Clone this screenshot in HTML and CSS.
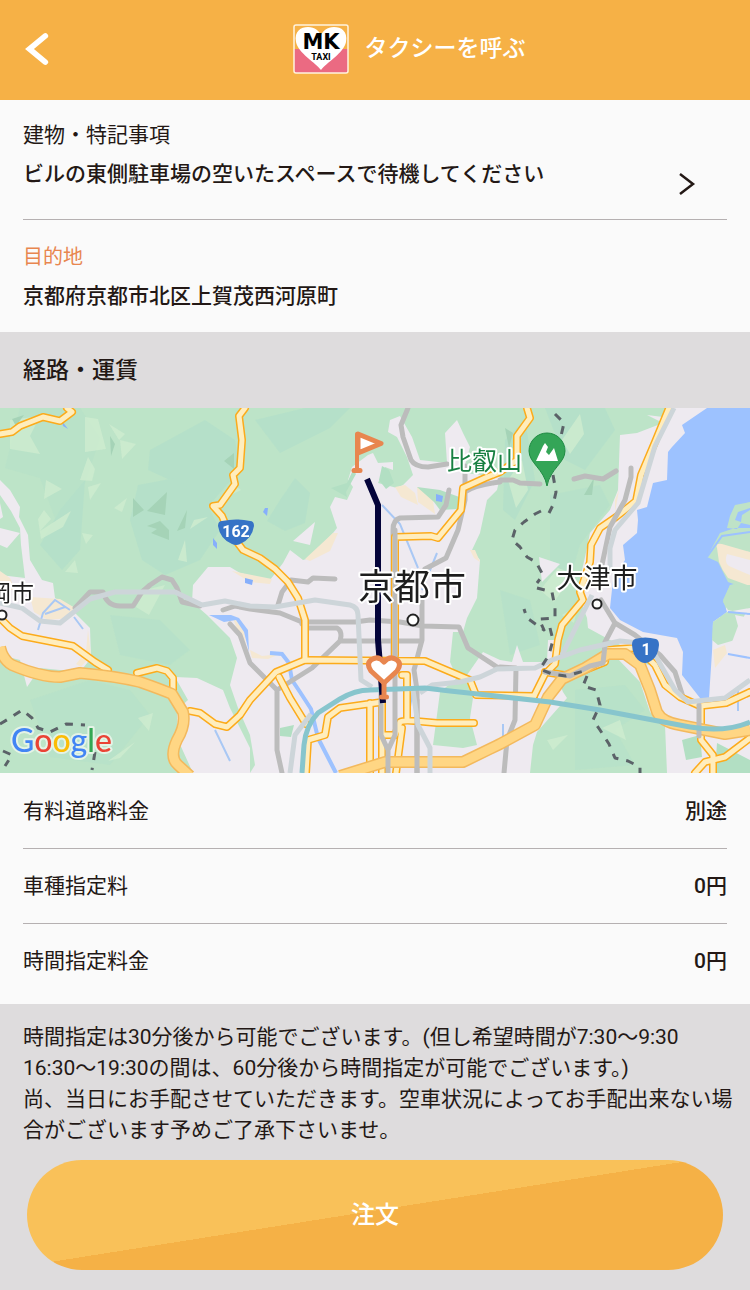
FILE: index.html
```html
<!DOCTYPE html>
<html lang="ja">
<head>
    <meta charset="UTF-8">
    <meta name="viewport" content="width=device-width, initial-scale=1.0">
    <title>タクシーを呼ぶ</title>
    <link rel="stylesheet" href="styles.css">
</head>
<body>
    <!-- Header -->
    <header class="header">
        <button type="button" class="back-button" aria-label="戻る">
            <svg width="30" height="40" viewBox="0 0 30 40"><path d="M25 6 8 20 25 34" fill="none" stroke="#fff" stroke-width="6" stroke-linecap="round" stroke-linejoin="miter"/></svg>
        </button>
        <div class="brand">
            <svg class="logo" width="56" height="50" viewBox="0 0 56 50">
                <rect x="1" y="1" width="54" height="48" rx="2" fill="#f6b146"/>
                <path d="M1 25h54v22a2 2 0 0 1-2 2H3a2 2 0 0 1-2-2z" fill="#eb6a82"/>
                <path d="M28 46C23 39 5 29 3 18C1 7 8 3 15 3C22 3 26 7 28 11C30 7 34 3 41 3C48 3 55 7 53 18C51 29 33 39 28 46z" fill="#fff"/>
                <rect x="1" y="1" width="54" height="48" rx="2" fill="none" stroke="#fff3df" stroke-width="1.500"/>
                <text class="logo-mk" x="28" y="25" text-anchor="middle">MK</text>
                <text class="logo-taxi" x="28" y="36" text-anchor="middle">TAXI</text>
            </svg>
            <h1>タクシーを呼ぶ</h1>
        </div>
    </header>

    <main>
        <!-- Pickup and destination -->
        <section class="places">
            <button type="button" class="place place-link">
                <span class="place-text">
                    <span class="place-label">建物・特記事項</span>
                    <span class="place-value">ビルの東側駐車場の空いたスペースで待機してください</span>
                </span>
                <svg class="chevron" width="18" height="24" viewBox="0 0 18 24"><path d="M2 2l13 10L2 22" fill="none" stroke="#231815" stroke-width="2.500"/></svg>
            </button>
            <div class="place">
                <span class="place-text">
                    <span class="place-label accent">目的地</span>
                    <span class="place-value">京都府京都市北区上賀茂西河原町</span>
                </span>
            </div>
        </section>

        <h2 class="section-title">経路・運賃</h2>

        <!-- Route map -->
        <svg class="map" viewBox="0 408 750 365" role="img" aria-label="経路の地図">
            <defs>
                <g id="roads">
                    <path d="M0 434L12 432 20 426 43 417 60 421 72 412 67 408M245 408L239 416 242 440 240 468 233 475 235 484 220 505 213 506 222 516 228 530 243 550 260 558 275 569 288 582 298 598 305 620V660"/>
                    <path d="M527 408L530 418 517 436V460L500 472 485 478 463 488 461 510 438 538 431 536 395 537V655M0 618L10 628 22 636 73 646 95 662 108 670M137 673L157 668 167 671 173 678V690M190 711L200 713 215 724 227 727 240 715 250 700 276 672 305 660 425 661 465 678 470 680 476 695 534 696"/>
                    <path d="M279 677L290 698 306 724M306 773L308 740 325 735 328 717 340 708 382 702M370 703V773M382 702V773M384 735H395L400 722Q403 720 415 721L437 723H474M402 675H407V720M402 728L396 773"/>
                    <path d="M669 408L655 442 641 475 636 501 616 517 600 528 591 545 590 562 580 592 583 600 562 625 558 640 555 664 545 674 534 696M545 672L570 676 590 668 605 662 606 650 634 648M640 650L655 665 665 685 680 697 700 706 726 703 750 692M701 706V740L713 755V773M750 738L725 757 705 762 695 773"/>
                </g>
                <path id="expressway" d="M0 647Q3 660 12 665Q40 677 60 677L80 673Q115 676 140 682Q160 689 172 694L183 712Q186 725 177 740Q169 757 178 765L190 776M340 776L385 762H463L500 744 535 725 548 697 562 679 585 668 608 654 625 654 640 665 650 690 657 712Q662 722 680 725L725 734 750 730"/>
            </defs>

            <rect y="408" width="750" height="365" fill="#bde4c8"/>

            <!-- Terrain shading -->
            <g fill="#b2dfca" opacity=".7">
                <path d="M150 450L205 420 235 440 240 470 205 510 180 500 170 480 148 470z"/>
                <path d="M138 485L175 478 205 500 220 530 200 560 165 575 142 560 130 520z"/>
                <path d="M20 408h60l20 30-20 60-25 20-15-40-35-10z" opacity=".5"/>
                <path d="M60 510L85 480 80 550 62 570 40 545zM280 500l15-22 15 15-5 30-20 8-18-10z"/>
                <path d="M255 420l50-12h45l-20 20-50 25zM545 408h60l10 22-30 40-20-10zM505 440l20-20 10 60-20 40-12-10z"/>
                <path d="M550 495l50-10 10 20-30 40-10 35-20-20zM500 590l30 10 10 45-30 10zM110 615l50 5 30 30-20 15-50-10z" opacity=".7"/>
                <path d="M30 700l60-20 40 10 20 25-40 50-60-8zM575 690l50-5 20 25-30 20 20 35-60 5z" opacity=".6"/>
            </g>
            <g fill="#cdebcf" opacity=".9">
                <path d="M85 417l13 2 8 30-21 3zM88 457l7 12-3 12-12-1zM109 424l16 10-6 6zM120 440l16 4-14 15zM46 480l16 9-18 10zM88 487l13-4-11 17zM127 498l-5 14-8-4zM44 510l7 9-11 12 31-20-8 16-22 12-3-20z"/>
                <path d="M82 533l11 2-7 9zM75 560l3 13-13-1zM185 540l2 22-9-2zM208 517l-18 12 4-9zM235 485l6 5-10 5zM10 420l30-4-10 20 10 18-30-5z"/>
                <path d="M138 718l15-5-4 18zM135 742l-15 16-12 3zM508 480l14-20 6 30-12 18zM562 440l18-26 4 20-14 20zM540 590l18-22 16 6-20 28z"/>
                <path d="M602 728l18-8 6 20zM568 735l-15 15-6-10zM562 615l16-10-4 18zM145 590l20-5-16 30-13-8z"/>
            </g>
            <g fill="#a5d3b7">
                <path d="M133 498l11 12-11 7zM167 492l-2 23-18-4zM160 521l9 9v10l-18-7 6-4-10-3zM187 510l-2 18-8 3zM110 436l5 8-4 12zM224 461l10-8v16z"/>
                <path d="M505 428l8 5-4 15zM584 495l10-17-2 17zM12 419l12-4-8 11z"/>
            </g>

            <!-- Built-up areas -->
            <g fill="#eeeaf0">
                <path d="M0 480L10 490 20 507 19 517 28 535 30 560 42 580 53 583 55 598 72 610 90 628 91 658 80 672 40 668 27 687 20 660 0 655V575L25 578 21 545 20 528 11 511 0 495z"/>
                <path d="M0 528L20 533 7 548 0 545zM0 503l3 14-3 2z"/>
                <path d="M193 585L208 567H230L240 573 270 580 283 563 290 550 303 560 310 558 333 533 337 528 330 507 335 497 347 500 353 487 348 480 352 467 368 455 373 453 378 463 393 462V470L385 467 378 483 397 488 403 485 413 475 407 457 397 437 388 432 390 420 400 416 412 437 420 460 447 463 445 433 457 420 463 433 470 447 463 473 500 477 497 490 487 500 480 533 472 550 480 560 477 598 467 618 463 632H453L450 662 457 678 440 692 433 745 463 748 477 745 470 718 473 698 467 675 483 652 500 660 512 662 517 645 523 662 547 662 548 640H555L553 668 563 692 567 698 537 732 533 745 530 773H250L255 765 250 735 238 708 230 685 237 658 230 638 207 615 192 602z"/>
                <path d="M175 677L197 678 223 690 230 708 250 748 250 773H193L178 740 177 710 188 700z"/>
                <path d="M620 435L637 433 663 423 647 415 663 417 667 408H720V620L700 640 705 680H750V773H667L665 725 650 712 640 682 617 658 650 665 635 652 610 640 588 628 587 618 577 592 585 557 590 533 610 510 618 490z"/>
                <path d="M293 541l22-19-5 23zM539 557l21 7-18 18zM750 560V773H690L700 700 712 640 730 600z"/>
            </g>
            <g fill="#f5e8d2">
                <path d="M0 571l10 7 5 12H0zM30 597l30 2 15 9-5 10-22 2-14-8zM333 533l5 0-8 18-20 10-5-2zM395 487l10-2 10 8 3 12-17-8zM417 487l15 7 3 20-17-12zM615 500l4-10-4 22zM470 550l5 0 5 12-6-4zM232 571l40 8-2 5-20-2zM88 630l3 25-10 12-5-3 10-12z"/>
                <path d="M250 650l12 6 18-2-12 5-16-1zM232 616l12 14 3 24-8-20z"/>
            </g>
            <!-- Green patches inside the city -->
            <path d="M331 488L347 483 353 470 356 474 346 492 347 497zM417 487L440 490 462 498 458 509 440 510 434 502zM379 480l3-14 7 4 5 13-8 6zM682 740L700 735 702 757 686 760zM717 743L750 760V773H715zM280 728l14-3-3 12-11-1z" fill="#b2dfc3"/>

            <!-- Lake and rivers -->
            <path d="M707 408L682 425 685 433 672 447 668 452 667 480 653 483 647 507 637 510 638 520 637 533 623 545 625 560 613 580 610 608 620 620 643 632 677 638 683 652 682 675 700 698 706 706 709 698 712 652 713 622 727 612 723 600 730 585 750 580V408z" fill="#9dc2ff"/>
            <path d="M750 502L735 505 730 516 727 528 737 529 741 523 750 525V510L742 515 741 522 735 520 738 512 750 508zM707 557L720 533 735 528 750 528V590L728 582 718 562z" fill="#bfe3c7"/>
            <path d="M717 548Q715 543 722 544L750 552V586L728 578Q722 570 719 562z" fill="#f5e8d2"/>
            <path d="M727 554Q724 562 729 566L750 575V560z" fill="#eeeaf0"/>
            <path d="M730 585L723 602 728 610 745 614 735 640 718 645 712 640 713 622 727 612 750 608V585z" fill="#bfe3c7"/>
            <path d="M735 615L750 618V690H710L714 650 732 642 738 626z" fill="#eeeaf0"/>
            <path d="M713 650l12-5 2 8-12 15z" fill="#f5e8d2"/>
            <path d="M707 557L722 536 750 532M728 612L750 614M728 654L750 658" fill="none" stroke="#9dc2ff" stroke-width="2"/>
            <path d="M209 615l22 0 8 3 9 12 1 22-5-20-8-12-12 2z" fill="#9dc2ff"/>
            <path d="M270 653L282 654 289 663 292 680 300 692 311 709 318 738 336 773" fill="none" stroke="#9dc2ff" stroke-width="4"/>
            <path d="M38 630L43 613 55 600 70 610M45 614L65 607M74 617L83 629M382 505L400 524 418 568M437 553L422 590M215 730L230 761M738 686v25M413 690l-4 22M503 724v16" fill="none" stroke="#a9c8f4" stroke-width="2"/>
            <path d="M436 494l7 2-1 6-6-1zM265 508l3 0-1 8-4-4zM213 538l4 5 0 6-4-4zM62 421l6 8-5-3zM245 578l8 2-1 5-7-2z" fill="#86affb"/>

            <!-- Grey roads -->
            <g class="road-grey">
                <path d="M408 408L401 425 403 437 411 460Q415 467 428 467L447 464M465 466V500L458 530 446 558 425 569M465 492Q475 485 500 482M449 490L446 505 438 517 400 518Q393 520 393 530V655"/>
                <path d="M223 610L235 606 250 609 280 613 302 622 355 622 370 620 400 622 423 626 459 627 468 648 497 667M302 624L307 628H337Q341 630 341 636L340 641H420M340 641L312 668 277 690V750L282 773M230 624L240 635 250 663 277 690M335 579L313 578 308 582 291 580 282 592 278 605"/>
                <path d="M422 600V640L414 670 417 690V773"/>
                <path d="M75 608L90 592 103 592Q107 606 120 606H133L142 592 150 585 162 577 172 580 177 588 182 602 200 606"/>
                <path d="M500 480L513 480 520 483 540 484M574 479L585 476 603 479 616 471M601 600L615 623 635 635 660 655 675 672 683 697M615 623L605 642M500 667L516 668 515 720 507 740 504 773"/>
            </g>

            <!-- Main roads and expressway -->
            <use href="#roads" class="road road-line"/>
            <use href="#roads" class="road road-fill"/>
            <use href="#expressway" class="road highway-line"/>
            <use href="#expressway" class="road highway-fill"/>
            <g class="road-grey">
                <path d="M395 530V735L388 750V773M381 690V735L388 750M417 700V773M699 705V736M545 672L570 676 590 666 603 663 605 645M631 468V477L625 500 610 527 603 560 601 570"/>
            </g>
            <g class="road-pale">
                <path d="M0 603L22 608 40 621 60 623 75 611 90 599 115 592H175L202 605 225 601 250 606 275 607 315 600 350 605Q358 607 358 615L361 680 372 687M420 693L432 685 460 682 480 677 497 669 535 668 552 660 580 650 620 641 640 643M674 408L655 446 638 503 615 530 610 548V570M592 595L562 655M655 655L675 690 688 702 725 698 750 680M413 690L418 725 430 748V773M311 714L295 735 290 773"/>
            </g>
            <!-- Shinkansen -->
            <path d="M302 773L304 745Q306 725 318 713L340 699Q355 690 370 690L425 688 450 691 550 702 600 710 690 727Q725 733 750 722" fill="none" stroke="#87c5cd" stroke-width="5"/>
            <!-- Prefecture border -->
            <path d="M555 414L564 423 561 436M553 475L556 492 553 505 549 513M541 511L535 514 524 522 515 530 512 540 520 547 527 557 536 562 543 575 537 583M537 588L552 592 555 608V618L539 619 544 630 527 618 524 609M550 628L553 640 549 655 540 669 552 674 566 676 584 671M587 676L583 686 596 690 600 705 593 720 600 730 609 744 615 758 628 761 640 767V773" class="border-line"/>
            <path d="M0 724L10 718 22 710 32 718 38 728 50 732 66 724 85 725M95 752L92 770M3 751L12 755 5 766" class="border-line"/>

            <!-- Route -->
            <path d="M367 479L378 505V640L383 703" fill="none" stroke="#04043a" stroke-width="6"/>

            <!-- Place names -->
            <g class="map-label">
                <text class="city" x="412" y="600" text-anchor="middle">京都市</text>
                <text class="town" x="597" y="588" text-anchor="middle">大津市</text>
                <text class="small-town" x="34" y="601" text-anchor="end">岡市</text>
                <text class="mountain" x="447" y="470">比叡山</text>
            </g>
            <g fill="#fff" stroke="#222" stroke-width="2">
                <circle cx="413" cy="620" r="5.500"/>
                <circle cx="597" cy="604" r="4.500"/>
                <circle cx="2" cy="615" r="4.500"/>
            </g>

            <!-- Mountain pin -->
            <path d="M547 486C544 469 529 463 529 451A18 18 0 0 1 565 451C565 463 550 469 547 486z" fill="#34a557" stroke="#208a43"/>
            <path d="M536 461L543 446 545 443 548 447 546 452 549 455 554 448 558 461z" fill="#fff"/>

            <!-- Route shields -->
            <path d="M222 521Q236 518 250 521Q254 521 254 526Q252 539 240 544Q236 546 232 544Q220 539 218 526Q218 521 222 521z" fill="#3673c6"/>
            <text class="shield" x="236" y="537" text-anchor="middle">162</text>
            <path d="M635 639Q645 636 656 639Q659 640 659 645Q658 658 649 662Q645 664 641 662Q633 658 632 645Q632 640 635 639z" fill="#3673c6"/>
            <text class="shield" x="646" y="655" text-anchor="middle">1</text>

            <!-- Destination flag -->
            <g stroke="#e8864f" stroke-linecap="round" stroke-linejoin="round">
                <path d="M357 470V434" stroke-width="4"/>
                <path d="M358 434L381 443.500 358 453z" fill="#fff" stroke-width="5"/>
                <path d="M354 470.500h6" stroke-width="5"/>
            </g>
            <!-- Pickup heart -->
            <path d="M384 683V697M381.500 697h5" fill="none" stroke="#e8864f" stroke-width="5" stroke-linecap="round"/>
            <path d="M384 683L371 671Q366 664 371 660Q378 655 384 662Q390 655 397 660Q402 664 397 671z" fill="#fff" stroke="#e8864f" stroke-width="5" stroke-linejoin="round"/>

            <text class="google" x="11" y="752"><tspan fill="#4285f4">G</tspan><tspan fill="#ea4335">o</tspan><tspan fill="#fbbc05">o</tspan><tspan fill="#4285f4">g</tspan><tspan fill="#34a853">l</tspan><tspan fill="#ea4335">e</tspan></text>
        </svg>

        <!-- Fares -->
        <table class="fares">
            <tbody>
                <tr><th scope="row">有料道路料金</th><td>別途</td></tr>
                <tr><th scope="row">車種指定料</th><td>0円</td></tr>
                <tr><th scope="row">時間指定料金</th><td>0円</td></tr>
            </tbody>
        </table>

        <!-- Notice and order button -->
        <section class="order">
            <p class="notice">時間指定は30分後から可能でございます。(但し希望時間が7:30～9:30<br>16:30～19:30の間は、60分後から時間指定が可能でございます。)<br>尚、当日にお手配させていただきます。空車状況によってお手配出来ない場合がございます予めご了承下さいませ。</p>
            <button type="button" class="order-button">注文</button>
        </section>
    </main>
</body>
</html>
```
FILE: styles.css
```css
/* Basic Reset */
* {
    margin: 0;
    padding: 0;
    box-sizing: border-box;
}

body {
    min-height: 100vh;
    background-color: #dedcdd;
    color: #231815;
    font-family: Roboto, "Noto Sans CJK JP", sans-serif;
    font-size: 21px;
    line-height: 30px;
}

button {
    border: none;
    background: none;
    color: inherit;
    font: inherit;
    cursor: pointer;
}

/* Header */
.header {
    display: grid;
    grid-template-columns: 72px 1fr 72px;
    align-items: center;
    height: 100px;
    padding-bottom: 2px;
    background-color: #f6b146;
    color: #fff;
}
.back-button {
    display: flex;
    padding: 0 22px;
}
.brand {
    display: flex;
    justify-content: center;
    align-items: center;
    gap: 16px;
    padding-left: 68px;
}
.header h1 {
    font-size: 23px;
    font-weight: 500;
}
.logo-mk {
    font-family: "DejaVu Sans", sans-serif;
    font-size: 21px;
    font-weight: 700;
}
.logo-taxi {
    font-family: Roboto, sans-serif;
    font-size: 9px;
    font-weight: 700;
}

/* Pickup and destination */
.places {
    padding: 0 23px;
    background-color: #fafafa;
}
.place {
    display: flex;
    justify-content: space-between;
    align-items: center;
    width: 100%;
    padding: 22px 0 21px;
    text-align: left;
}
.place-link {
    padding: 20px 31px 23px 0;
    border-bottom: 1px solid #b5b0b1;
}
.place-text {
    display: flex;
    flex-direction: column;
    gap: 9px;
}
.place-link .place-text {
    padding-bottom: 7px;
}
.place-link .chevron {
    align-self: flex-end;
}
.place-value {
    font-weight: 500;
}
.accent {
    color: #e8864f;
    font-size: 20px;
}

.section-title {
    padding: 24px 23px 22px;
    background-color: #dedcdd;
    font-size: 23px;
    font-weight: 500;
}

/* Map */
.map {
    display: block;
    width: 100%;
    height: auto;
}
.road,
.road-grey,
.road-pale,
.border-line {
    fill: none;
    stroke-linejoin: round;
}
.road-grey {
    stroke: #bcbcbc;
    stroke-width: 5;
    stroke-linecap: round;
}
.road-pale {
    stroke: #cdd5d9;
    stroke-width: 5;
}
.road-line {
    stroke: #fcab1b;
    stroke-width: 8;
    stroke-linecap: round;
}
.road-fill {
    stroke: #ffedbd;
    stroke-width: 5;
    stroke-linecap: round;
}
.highway-line {
    stroke: #f3b95d;
    stroke-width: 12;
}
.highway-fill {
    stroke: #ffd684;
    stroke-width: 9;
}
.border-line {
    stroke: #5b6268;
    stroke-width: 3;
    stroke-dasharray: 8 8;
}
.map-label text {
    font-family: "Noto Sans CJK JP", sans-serif;
    fill: #1d1d1d;
    stroke: #fff;
    stroke-width: 4px;
    stroke-linejoin: round;
    paint-order: stroke;
}
.map-label .city {
    font-size: 36px;
}
.map-label .town {
    font-size: 27px;
}
.map-label .small-town {
    font-size: 23px;
}
.map-label .mountain {
    font-size: 25px;
    fill: #188042;
}
.shield {
    fill: #fff;
    font-size: 16px;
    font-weight: 700;
}
.google {
    font-family: Lato, sans-serif;
    font-size: 32px;
    font-weight: 500;
    stroke: #e4f3e6;
    stroke-width: 4px;
    stroke-linejoin: round;
    paint-order: stroke;
}

/* Fares */
.fares {
    display: block;
    padding: 1px 23px 6px;
    background-color: #fafafa;
}
.fares tbody {
    display: block;
}
.fares tr {
    display: flex;
    justify-content: space-between;
    padding: 22px 0;
}
.fares tr + tr {
    border-top: 1px solid #b5b0b1;
}
.fares th {
    font-weight: 400;
}
.fares td {
    font-weight: 500;
}

/* Notice and order button */
.order {
    padding: 18px 27px 20px;
}
.notice {
    margin: 0 -14px 14px -4px;
    line-height: 31px;
}
.order-button {
    display: block;
    width: 100%;
    padding: 40px;
    border-radius: 55px;
    background: linear-gradient(171deg, #f9c159 48%, #f5b146 48%);
    color: #fff;
    font-size: 24px;
    font-weight: 500;
}
```
